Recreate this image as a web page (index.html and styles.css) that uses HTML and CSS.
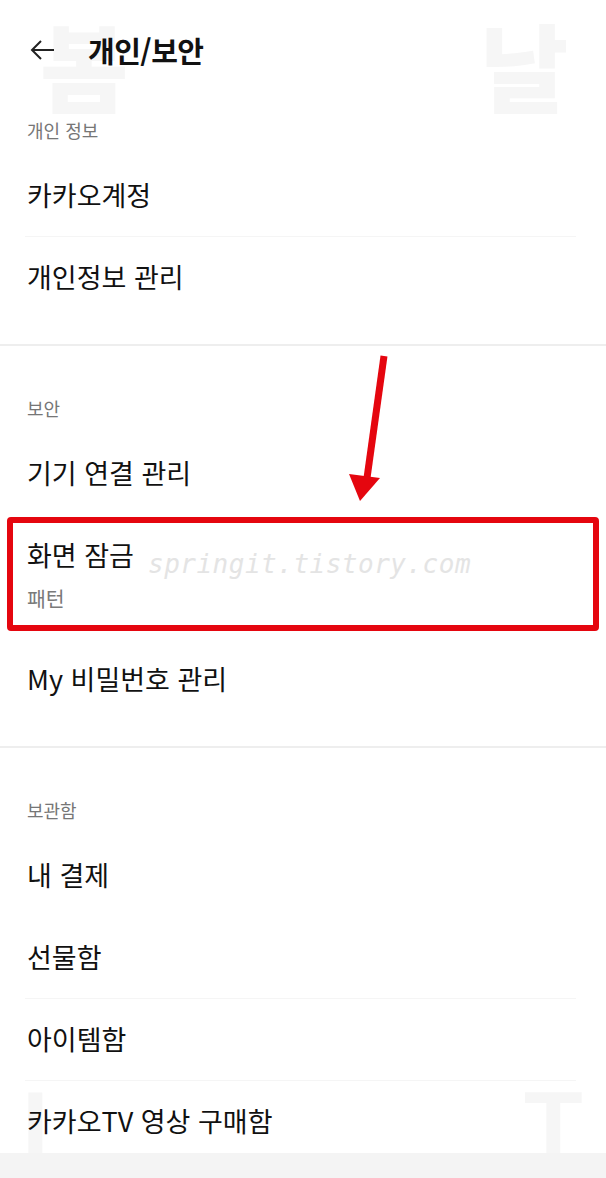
FILE: index.html
```html
<!DOCTYPE html>
<html lang="ko">
<head>
    <meta charset="UTF-8">
    <title>개인/보안</title>
    <link rel="stylesheet" href="styles.css">
</head>
<body>

<div class="page">
    <span class="mark mark-bom">봄</span>
    <span class="mark mark-nal">날</span>
    <span class="mark mark-i">I</span>
    <span class="mark mark-t">T</span>

    <header class="topbar">
        <svg class="back" width="26" height="22" viewBox="0 0 26 22">
            <path d="M24 11H2M11 2L2 11l9 9" fill="none" stroke="#222" stroke-width="2"/>
        </svg>
        <h1>개인/보안</h1>
    </header>

    <section class="group first">
        <p class="group-label">개인 정보</p>
        <div class="row line">카카오계정</div>
        <div class="row">개인정보 관리</div>
    </section>

    <section class="group">
        <p class="group-label">보안</p>
        <div class="row">기기 연결 관리</div>
        <div class="row tall">
            <span class="row-title">화면 잠금</span>
            <span class="row-sub">패턴</span>
            <span class="stamp">springit.tistory.com</span>
            <span class="highlight"></span>
        </div>
        <div class="row">My 비밀번호 관리</div>

        <svg class="pointer" width="60" height="160" viewBox="0 0 60 160">
            <path d="M41 2L24 124" stroke="#e5060f" stroke-width="7" fill="none"/>
            <path d="M6 120L37 124L17 147Z" fill="#e5060f"/>
        </svg>
    </section>

    <section class="group">
        <p class="group-label">보관함</p>
        <div class="row">내 결제</div>
        <div class="row line">선물함</div>
        <div class="row line">아이템함</div>
        <div class="row">카카오TV 영상 구매함</div>
    </section>

    <div class="bottom-bar"></div>
</div>

</body>
</html>
```

FILE: styles.css
```css
body {
    margin: 0;
    background: #fff;
    font-family: "Noto Sans CJK KR", "Noto Sans", sans-serif;
    color: #111;
}
.page {
    position: relative;
    height: 1178px;
    overflow: hidden;
}
.mark {
    position: absolute;
    font-size: 96px;
    font-weight: 900;
    line-height: 84px;
    color: #f6f6f6;
    z-index: 0;
}
.mark-bom { left: 40px; top: 22px; }
.mark-nal { left: 480px; top: 22px; }
.mark-i { left: 22px; top: 1084px; font-family: "Liberation Sans", sans-serif; }
.mark-t { left: 524px; top: 1084px; font-family: "Liberation Sans", sans-serif; }

.topbar {
    position: relative;
    z-index: 1;
    height: 100px;
    display: flex;
    align-items: center;
    padding-left: 30px;
    box-sizing: border-box;
}
.topbar .back {
    margin-right: 32px;
}
.topbar h1 {
    margin: 0;
    font-size: 29px;
    font-weight: 700;
    letter-spacing: -0.5px;
}

.group {
    position: relative;
    z-index: 1;
    padding-bottom: 26px;
}
.group + .group {
    border-top: 2px solid #eeeeee;
    padding-top: 32px;
}
.group-label {
    margin: 0;
    height: 54px;
    box-sizing: border-box;
    padding: 19px 27px 0;
    font-size: 18px;
    line-height: 22px;
    color: #767676;
}
.row {
    position: relative;
    height: 82px;
    display: flex;
    flex-direction: column;
    justify-content: center;
    padding: 0 27px;
    font-size: 27px;
    line-height: 32px;
}
.row.line::after {
    content: "";
    position: absolute;
    left: 25px;
    right: 30px;
    bottom: -1px;
    height: 1px;
    background: #f5f5f5;
}
.row.tall {
    height: 124px;
    justify-content: flex-start;
    box-sizing: border-box;
    padding-top: 25px;
}
.row-sub {
    margin-top: 15px;
    font-size: 20.5px;
    line-height: 24px;
    color: #7a7a7a;
}
.stamp {
    position: absolute;
    left: 148px;
    top: 34px;
    font-family: "DejaVu Sans Mono", monospace;
    font-style: italic;
    font-size: 26px;
    letter-spacing: 0.5px;
    color: #e4e4e4;
}
.highlight {
    position: absolute;
    left: 7px;
    right: 7px;
    top: 3px;
    height: 114px;
    box-sizing: border-box;
    border: 6px solid #e5060f;
    border-radius: 4px;
}
.pointer {
    position: absolute;
    left: 343px;
    top: 8px;
}
.bottom-bar {
    position: absolute;
    left: 0;
    right: 0;
    bottom: 0;
    height: 25px;
    background: #f4f4f4;
    z-index: 2;
}
```
